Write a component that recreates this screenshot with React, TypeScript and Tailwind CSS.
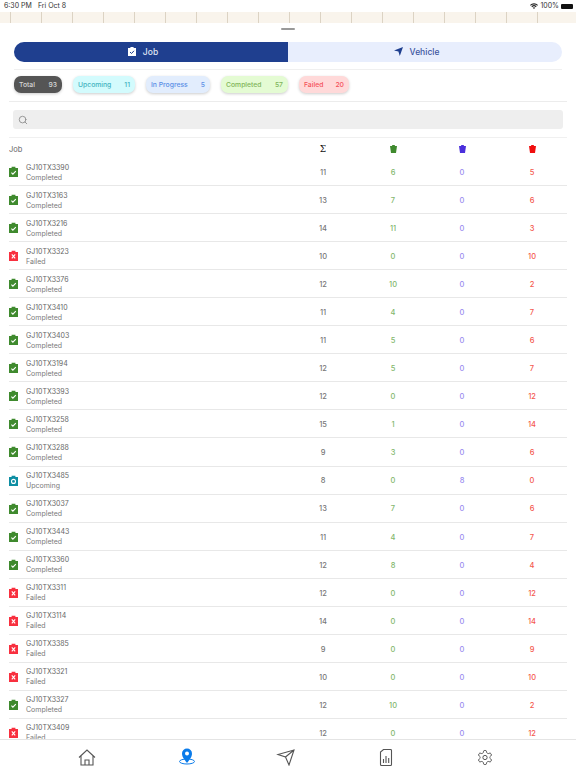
import { Search } from "lucide-react";

type Status = "Completed" | "Failed" | "Upcoming";

const jobs: [string, Status, number, number, number, number][] = [
  ["GJ10TX3390", "Completed", 11, 6, 0, 5],
  ["GJ10TX3163", "Completed", 13, 7, 0, 6],
  ["GJ10TX3216", "Completed", 14, 11, 0, 3],
  ["GJ10TX3323", "Failed", 10, 0, 0, 10],
  ["GJ10TX3376", "Completed", 12, 10, 0, 2],
  ["GJ10TX3410", "Completed", 11, 4, 0, 7],
  ["GJ10TX3403", "Completed", 11, 5, 0, 6],
  ["GJ10TX3194", "Completed", 12, 5, 0, 7],
  ["GJ10TX3393", "Completed", 12, 0, 0, 12],
  ["GJ10TX3258", "Completed", 15, 1, 0, 14],
  ["GJ10TX3288", "Completed", 9, 3, 0, 6],
  ["GJ10TX3485", "Upcoming", 8, 0, 8, 0],
  ["GJ10TX3037", "Completed", 13, 7, 0, 6],
  ["GJ10TX3443", "Completed", 11, 4, 0, 7],
  ["GJ10TX3360", "Completed", 12, 8, 0, 4],
  ["GJ10TX3311", "Failed", 12, 0, 0, 12],
  ["GJ10TX3114", "Failed", 14, 0, 0, 14],
  ["GJ10TX3385", "Failed", 9, 0, 0, 9],
  ["GJ10TX3321", "Failed", 10, 0, 0, 10],
  ["GJ10TX3327", "Completed", 12, 10, 0, 2],
  ["GJ10TX3409", "Failed", 12, 0, 0, 12],
];

const pills = [
  { label: "Total", count: 93, box: "w-[48px] bg-[#555555] text-[#d8d8d8]" },
  { label: "Upcoming", count: 11, box: "w-[62px] bg-[#d3fbfd] text-[#45b3c0]" },
  { label: "In Progress", count: 5, box: "w-[64px] bg-[#e2edfd] text-[#5b8fe6]" },
  { label: "Completed", count: 57, box: "w-[67px] bg-[#e4fbd3] text-[#7fb45a]" },
  { label: "Failed", count: 20, box: "w-[50px] bg-[#ffd9d9] text-[#f4515a]" },
];

function JobIcon({ status }: { status: Status }) {
  const fill = status === "Completed" ? "#3f8a2e" : status === "Failed" ? "#f8303f" : "#0e8ea3";
  return (
    <svg width="9" height="11" viewBox="0 0 9 11" className="shrink-0">
      <path d="M0 2h2.6V.8h3.8V2H9v9H0z" fill={fill} />
      {status === "Completed" && <path d="M2.4 6.6l1.5 1.5 2.9-3" fill="none" stroke="#fff" strokeWidth="1.1" />}
      {status === "Failed" && <path d="M2.8 4.4l3.4 4M6.2 4.4l-3.4 4" fill="none" stroke="#fff" strokeWidth="1.1" />}
      {status === "Upcoming" && <circle cx="4.5" cy="6.4" r="2" fill="none" stroke="#fff" strokeWidth="1.1" />}
    </svg>
  );
}

function Bin({ color }: { color: string }) {
  return (
    <svg width="7" height="8" viewBox="0 0 7 8">
      <path d="M2.3 0h2.4l.3 1H7L6 8H1L0 1h2z" fill={color} />
    </svg>
  );
}

function Row({ job }: { job: (typeof jobs)[number] }) {
  const [id, status, total, green, blue, red] = job;
  return (
    <div className="flex h-[28.05px] shrink-0 items-center border-b border-[#e8e8e8] text-[7.5px] font-medium">
      <div className="flex w-[281px] items-center gap-[8px]">
        <JobIcon status={status} />
        <div className="pt-[2px] text-[7px] leading-[10px] font-normal text-[#7a7a7a]">
          <div className="text-[#666666]">{id}</div>
          <div>{status}</div>
        </div>
      </div>
      <div className="w-[66px] pt-[2px] text-center text-[#777777]">{total}</div>
      <div className="ml-[4px] w-[66px] pt-[2px] text-center text-[#83b76d]">{green}</div>
      <div className="ml-[3px] w-[66px] pt-[2px] text-center text-[#9b8df0]">{blue}</div>
      <div className="ml-[4px] w-[66px] pt-[2px] text-center text-[#f4594f]">{red}</div>
    </div>
  );
}

export default function App() {
  return (
    <div className="flex h-[768px] w-[576px] flex-col overflow-hidden bg-white font-['Inter',sans-serif]">
      <div className="flex h-[12px] shrink-0 items-center justify-between pl-[4px] pr-[3px] text-[7px] text-[#333333]">
        <div className="flex gap-[6px]">
          <span>6:30 PM</span>
          <span>Fri Oct 8</span>
        </div>
        <div className="flex items-center gap-[2px]">
          <svg width="8" height="6" viewBox="0 0 8 6">
            <path d="M0 2a5.5 5.5 0 0 1 8 0L7.2 2.8a4.4 4.4 0 0 0-6.4 0zM1.4 3.4a3.6 3.6 0 0 1 5.2 0l-.8.8a2.4 2.4 0 0 0-3.6 0zM2.8 4.8a1.7 1.7 0 0 1 2.4 0L4 6z" fill="#222" />
          </svg>
          <span>100%</span>
          <div className="h-[5px] w-[12px] rounded-[1px] bg-[#111111]" />
        </div>
      </div>

      <div className="flex h-[11px] shrink-0 bg-[#f9f4ec] pl-[10px]">
        {Array.from({ length: 18 }).map((_, i) => (
          <div key={i} className="h-full w-[31px] shrink-0 border-l border-[#dcd3c4]" />
        ))}
      </div>

      <div className="flex min-h-0 flex-1 flex-col rounded-t-[6px] bg-white">
        <div className="mx-auto mt-[5px] h-[1.5px] w-[14px] shrink-0 rounded-full bg-[#999999]" />

        <div className="mx-[14px] mt-[12.5px] flex h-[19.5px] shrink-0 overflow-hidden rounded-full bg-[#e8eefd] text-[8.5px] font-medium">
          <div className="flex w-[274px] items-center justify-center gap-[7px] bg-[#1f3f8f] pr-[16px] text-[#dfe5f3]">
            <svg width="8" height="9" viewBox="0 0 8 9">
              <path d="M0 1h2.4V0h3.2v1H8v8H0z" fill="#fff" />
              <path d="M2 5l1.5 1.5L6 3.8" fill="none" stroke="#1f3f8f" strokeWidth="1" />
            </svg>
            <span className="pt-[1px]">Job</span>
          </div>
          <div className="flex flex-1 items-center justify-center gap-[7px] pr-[17px] text-[#3d559f]">
            <svg width="9" height="9" viewBox="0 0 9 9">
              <path d="M9 0L5.8 9 4.4 4.6 0 3.4z" fill="#1f3f8f" />
            </svg>
            <span className="pt-[1px]">Vehicle</span>
          </div>
        </div>

        <div className="mx-[14px] mt-[7.5px] h-px shrink-0 bg-[#f0f0f0]" />

        <div className="ml-[14px] mt-[6px] flex h-[17px] shrink-0 gap-[11px] text-[6.8px] font-medium">
          {pills.map((p) => (
            <div
              key={p.label}
              className={`flex items-center justify-between rounded-[7px] px-[5px] pt-[1px] shadow-[0_1px_3px_rgba(0,0,0,0.2)] ${p.box}`}
            >
              <span>{p.label}</span>
              <span>{p.count}</span>
            </div>
          ))}
        </div>

        <div className="mx-[9px] mt-[8px] h-px shrink-0 bg-[#ececec]" />

        <div className="mx-[13px] mt-[8px] flex h-[19px] shrink-0 items-center rounded-[3px] bg-[#eeeeee] pl-[5px]">
          <Search size={10} className="text-[#888888]" />
        </div>

        <div className="mx-[9px] mt-[8px] h-px shrink-0 bg-[#f0f0f0]" />

        <div className="mx-[9px] flex min-h-0 flex-1 flex-col overflow-hidden">
          <div className="flex h-[20px] shrink-0 items-center pt-[2px] text-[7.5px] text-[#666666]">
            <div className="w-[281px] pt-[2px]">Job</div>
            <div className="flex w-[66px] justify-center pt-[2px] font-['DejaVu_Serif',serif] text-[9px] text-[#111111]">Σ</div>
            <div className="ml-[4px] flex w-[66px] justify-center"><Bin color="#3f8a2e" /></div>
            <div className="ml-[3px] flex w-[66px] justify-center"><Bin color="#4a2fdc" /></div>
            <div className="ml-[4px] flex w-[66px] justify-center"><Bin color="#f00f0f" /></div>
          </div>
          {jobs.map((job) => (
            <Row key={job[0]} job={job} />
          ))}
        </div>

        <div className="flex h-[29px] shrink-0 border-t border-[#e4e4e4] bg-white">
          <div className="ml-[77px] mt-[9px] flex gap-[79.5px]">
            <svg width="20" height="17" viewBox="0 0 20 17" fill="none" stroke="#555" strokeWidth="1.1">
              <path d="M2 8.5L10 1l8 7.5M4 7v9h12V7M8 16v-5h4v5" />
            </svg>
            <svg width="20" height="17" viewBox="0 0 20 17" className="-mt-[1px]">
              <ellipse cx="10" cy="13.5" rx="7.5" ry="2.5" fill="none" stroke="#0a7bea" strokeWidth="1" />
              <path d="M10 15C6.5 10.5 5 8.5 5 5.5a5 5 0 0 1 10 0c0 3-1.5 5-5 9.5z" fill="#0a7bea" />
              <circle cx="10" cy="5.5" r="2" fill="#fff" />
            </svg>
            <svg width="20" height="17" viewBox="0 0 20 17" fill="none" stroke="#555" strokeWidth="1.1">
              <path d="M18 1L13 16 9.5 8 2 5.5zM18 1L9.5 8" />
            </svg>
            <svg width="20" height="17" viewBox="0 0 20 17" fill="none" stroke="#555" strokeWidth="1.1">
              <path d="M7.5.5h7a1 1 0 0 1 1 1v14a1 1 0 0 1-1 1h-9a1 1 0 0 1-1-1V3z" />
              <path d="M7.5 14V10M10 14V7M12.7 14V9" />
            </svg>
            <svg width="20" height="17" viewBox="0 0 24 24" fill="none" stroke="#555" strokeWidth="1.4">
              <path d="M12.22 2h-.44a2 2 0 0 0-2 2v.18a2 2 0 0 1-1 1.73l-.43.25a2 2 0 0 1-2 0l-.15-.08a2 2 0 0 0-2.73.73l-.22.38a2 2 0 0 0 .73 2.73l.15.1a2 2 0 0 1 1 1.72v.51a2 2 0 0 1-1 1.74l-.15.09a2 2 0 0 0-.73 2.73l.22.38a2 2 0 0 0 2.73.73l.15-.08a2 2 0 0 1 2 0l.43.25a2 2 0 0 1 1 1.73V20a2 2 0 0 0 2 2h.44a2 2 0 0 0 2-2v-.18a2 2 0 0 1 1-1.73l.43-.25a2 2 0 0 1 2 0l.15.08a2 2 0 0 0 2.73-.73l.22-.39a2 2 0 0 0-.73-2.73l-.15-.08a2 2 0 0 1-1-1.74v-.5a2 2 0 0 1 1-1.74l.15-.09a2 2 0 0 0 .73-2.73l-.22-.38a2 2 0 0 0-2.73-.73l-.15.08a2 2 0 0 1-2 0l-.43-.25a2 2 0 0 1-1-1.73V4a2 2 0 0 0-2-2z" />
              <circle cx="12" cy="12" r="3" />
            </svg>
          </div>
        </div>
      </div>
    </div>
  );
}
